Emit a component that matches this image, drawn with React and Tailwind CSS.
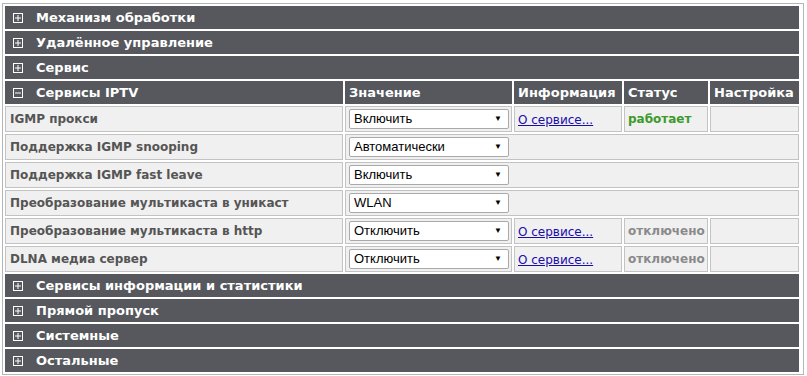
import React from "react"

const dark = "bg-[#56585d] text-white font-bold text-[13px] h-[23px] p-0 align-middle"
const cell = "bg-[#f0f0f0] border border-[#c3c3c3] h-[26px] p-0 align-middle"

function Toggle({ open }) {
  return (
    <svg width="10" height="10" viewBox="0 0 10 10" className="block">
      <rect x="0.5" y="0.5" width="9" height="9" fill="none" stroke="#fff" strokeWidth="1" />
      <line x1="2" y1="5" x2="8" y2="5" stroke="#fff" strokeWidth="1" />
      {!open && <line x1="5" y1="2" x2="5" y2="8" stroke="#fff" strokeWidth="1" />}
    </svg>
  )
}

function Section({ title, open }) {
  return (
    <tr>
      <td colSpan={5} className={dark}>
        <div className="flex items-center">
          <span className="w-[31px] pl-[8px]"><Toggle open={open} /></span>
          <span>{title}</span>
        </div>
      </td>
    </tr>
  )
}

function Select({ value }) {
  return (
    <div className="ml-[3px] flex h-[20px] w-[160px] items-center justify-between rounded-[2px] border border-[#a9a9a9] bg-white pl-[4px] pr-[6px] font-['Liberation_Sans',Arial,sans-serif] text-[13px] font-normal text-black">
      <span>{value}</span>
      <span className="text-[8px]">▼</span>
    </div>
  )
}

function Row({ label, value, info, status, statusOn }) {
  return (
    <tr>
      <td className={cell + " pl-[4px] text-[12px] font-bold text-[#555]"}>{label}</td>
      {info ? (
        <>
          <td className={cell}><Select value={value} /></td>
          <td className={cell + " pl-[3px]"}>
            <a href="#" className="text-[12px] text-[#1a0dab] underline">О сервисе...</a>
          </td>
          <td className={cell + " pl-[3px] text-[12px] font-bold " + (statusOn ? "text-[#3c9a2c]" : "text-[#8a8a8a]")}>{status}</td>
          <td className={cell}></td>
        </>
      ) : (
        <td colSpan={4} className={cell}><Select value={value} /></td>
      )}
    </tr>
  )
}

export default function App() {
  return (
    <div className="min-h-[376px] bg-white pt-[3px] pl-[2px] font-['DejaVu_Sans',Verdana,sans-serif]">
      <div className="w-[802px] border border-[#b5b5b5] pr-[2px]">
        <table className="w-full border-separate border-spacing-[2px] table-fixed">
          <colgroup>
            <col className="w-[338px]" />
            <col className="w-[167px]" />
            <col className="w-[108px]" />
            <col className="w-[84px]" />
            <col />
          </colgroup>
          <tbody>
            <Section title="Механизм обработки" />
            <Section title="Удалённое управление" />
            <Section title="Сервис" />
            <tr>
              <td className={dark}>
                <div className="flex items-center">
                  <span className="w-[31px] pl-[8px]"><Toggle open /></span>
                  <span>Сервисы IPTV</span>
                </div>
              </td>
              <td className={dark + " pl-[4px]"}>Значение</td>
              <td className={dark + " pl-[4px]"}>Информация</td>
              <td className={dark + " pl-[4px]"}>Статус</td>
              <td className={dark + " pl-[4px]"}>Настройка</td>
            </tr>
            <Row label="IGMP прокси" value="Включить" info status="работает" statusOn />
            <Row label="Поддержка IGMP snooping" value="Автоматически" />
            <Row label="Поддержка IGMP fast leave" value="Включить" />
            <Row label="Преобразование мультикаста в уникаст" value="WLAN" />
            <Row label="Преобразование мультикаста в http" value="Отключить" info status="отключено" />
            <Row label="DLNA медиа сервер" value="Отключить" info status="отключено" />
            <Section title="Сервисы информации и статистики" />
            <Section title="Прямой пропуск" />
            <Section title="Системные" />
            <Section title="Остальные" />
          </tbody>
        </table>
      </div>
    </div>
  )
}
